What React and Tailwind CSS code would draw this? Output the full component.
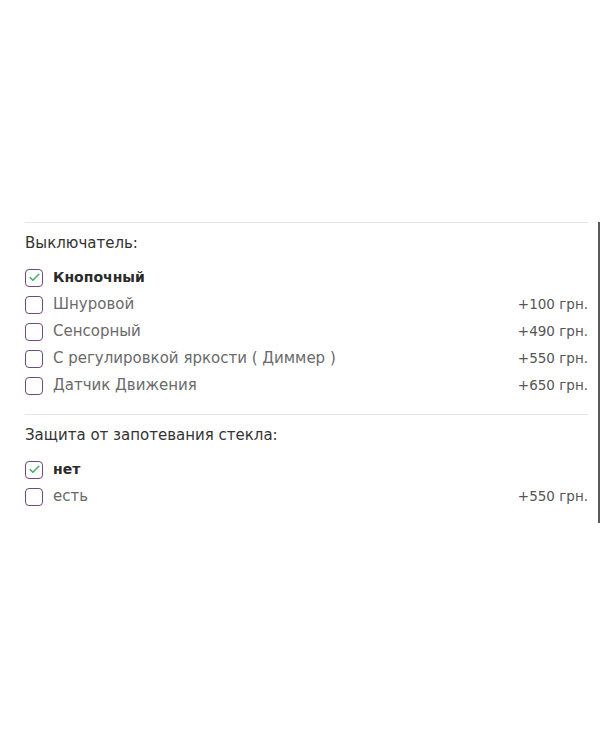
import { Check } from "lucide-react";

const groups = [
  {
    title: "Выключатель:",
    options: [
      { label: "Кнопочный", price: null, checked: true },
      { label: "Шнуровой", price: "+100 грн." },
      { label: "Сенсорный", price: "+490 грн." },
      { label: "С регулировкой яркости ( Диммер )", price: "+550 грн." },
      { label: "Датчик Движения", price: "+650 грн." },
    ],
  },
  {
    title: "Защита от запотевания стекла:",
    options: [
      { label: "нет", price: null, checked: true },
      { label: "есть", price: "+550 грн." },
    ],
  },
];

function Option({ label, price, checked }) {
  return (
    <label className="flex items-center h-[27px] cursor-pointer">
      <span className="w-[18px] h-[18px] rounded-[4px] border-[1.5px] border-[#6e4a7e] bg-white flex items-center justify-center shrink-0">
        {checked && <Check size={13} strokeWidth={3} className="text-[#4caf62]" />}
      </span>
      <span
        className={
          checked
            ? "ml-[10px] text-[14px] font-semibold text-[#2a2a2a]"
            : "ml-[10px] text-[15px] text-[#6a6a6a]"
        }
      >
        {label}
      </span>
      {price && <span className="ml-auto text-[13.5px] text-[#555]">{price}</span>}
    </label>
  );
}

export default function App() {
  return (
    <div className="min-h-[750px] bg-white pt-[219px] font-['DejaVu_Sans',sans-serif]">
      <div className="border-r-2 border-[#5a5a5a] pl-[25px] pr-[10px] pb-[13px]">
        {groups.map((group, i) => (
          <div
            key={group.title}
            className={
              i === 0
                ? "mt-[3px] border-t border-[#e6e6e6] pt-[10px] pb-[15px]"
                : "border-t border-[#e6e6e6] pt-[10px]"
            }
          >
            <div className="h-[20px] leading-[20px] text-[15px] text-[#333] mb-[11px]">{group.title}</div>
            {group.options.map((opt) => (
              <Option key={opt.label} {...opt} />
            ))}
          </div>
        ))}
      </div>
    </div>
  );
}
